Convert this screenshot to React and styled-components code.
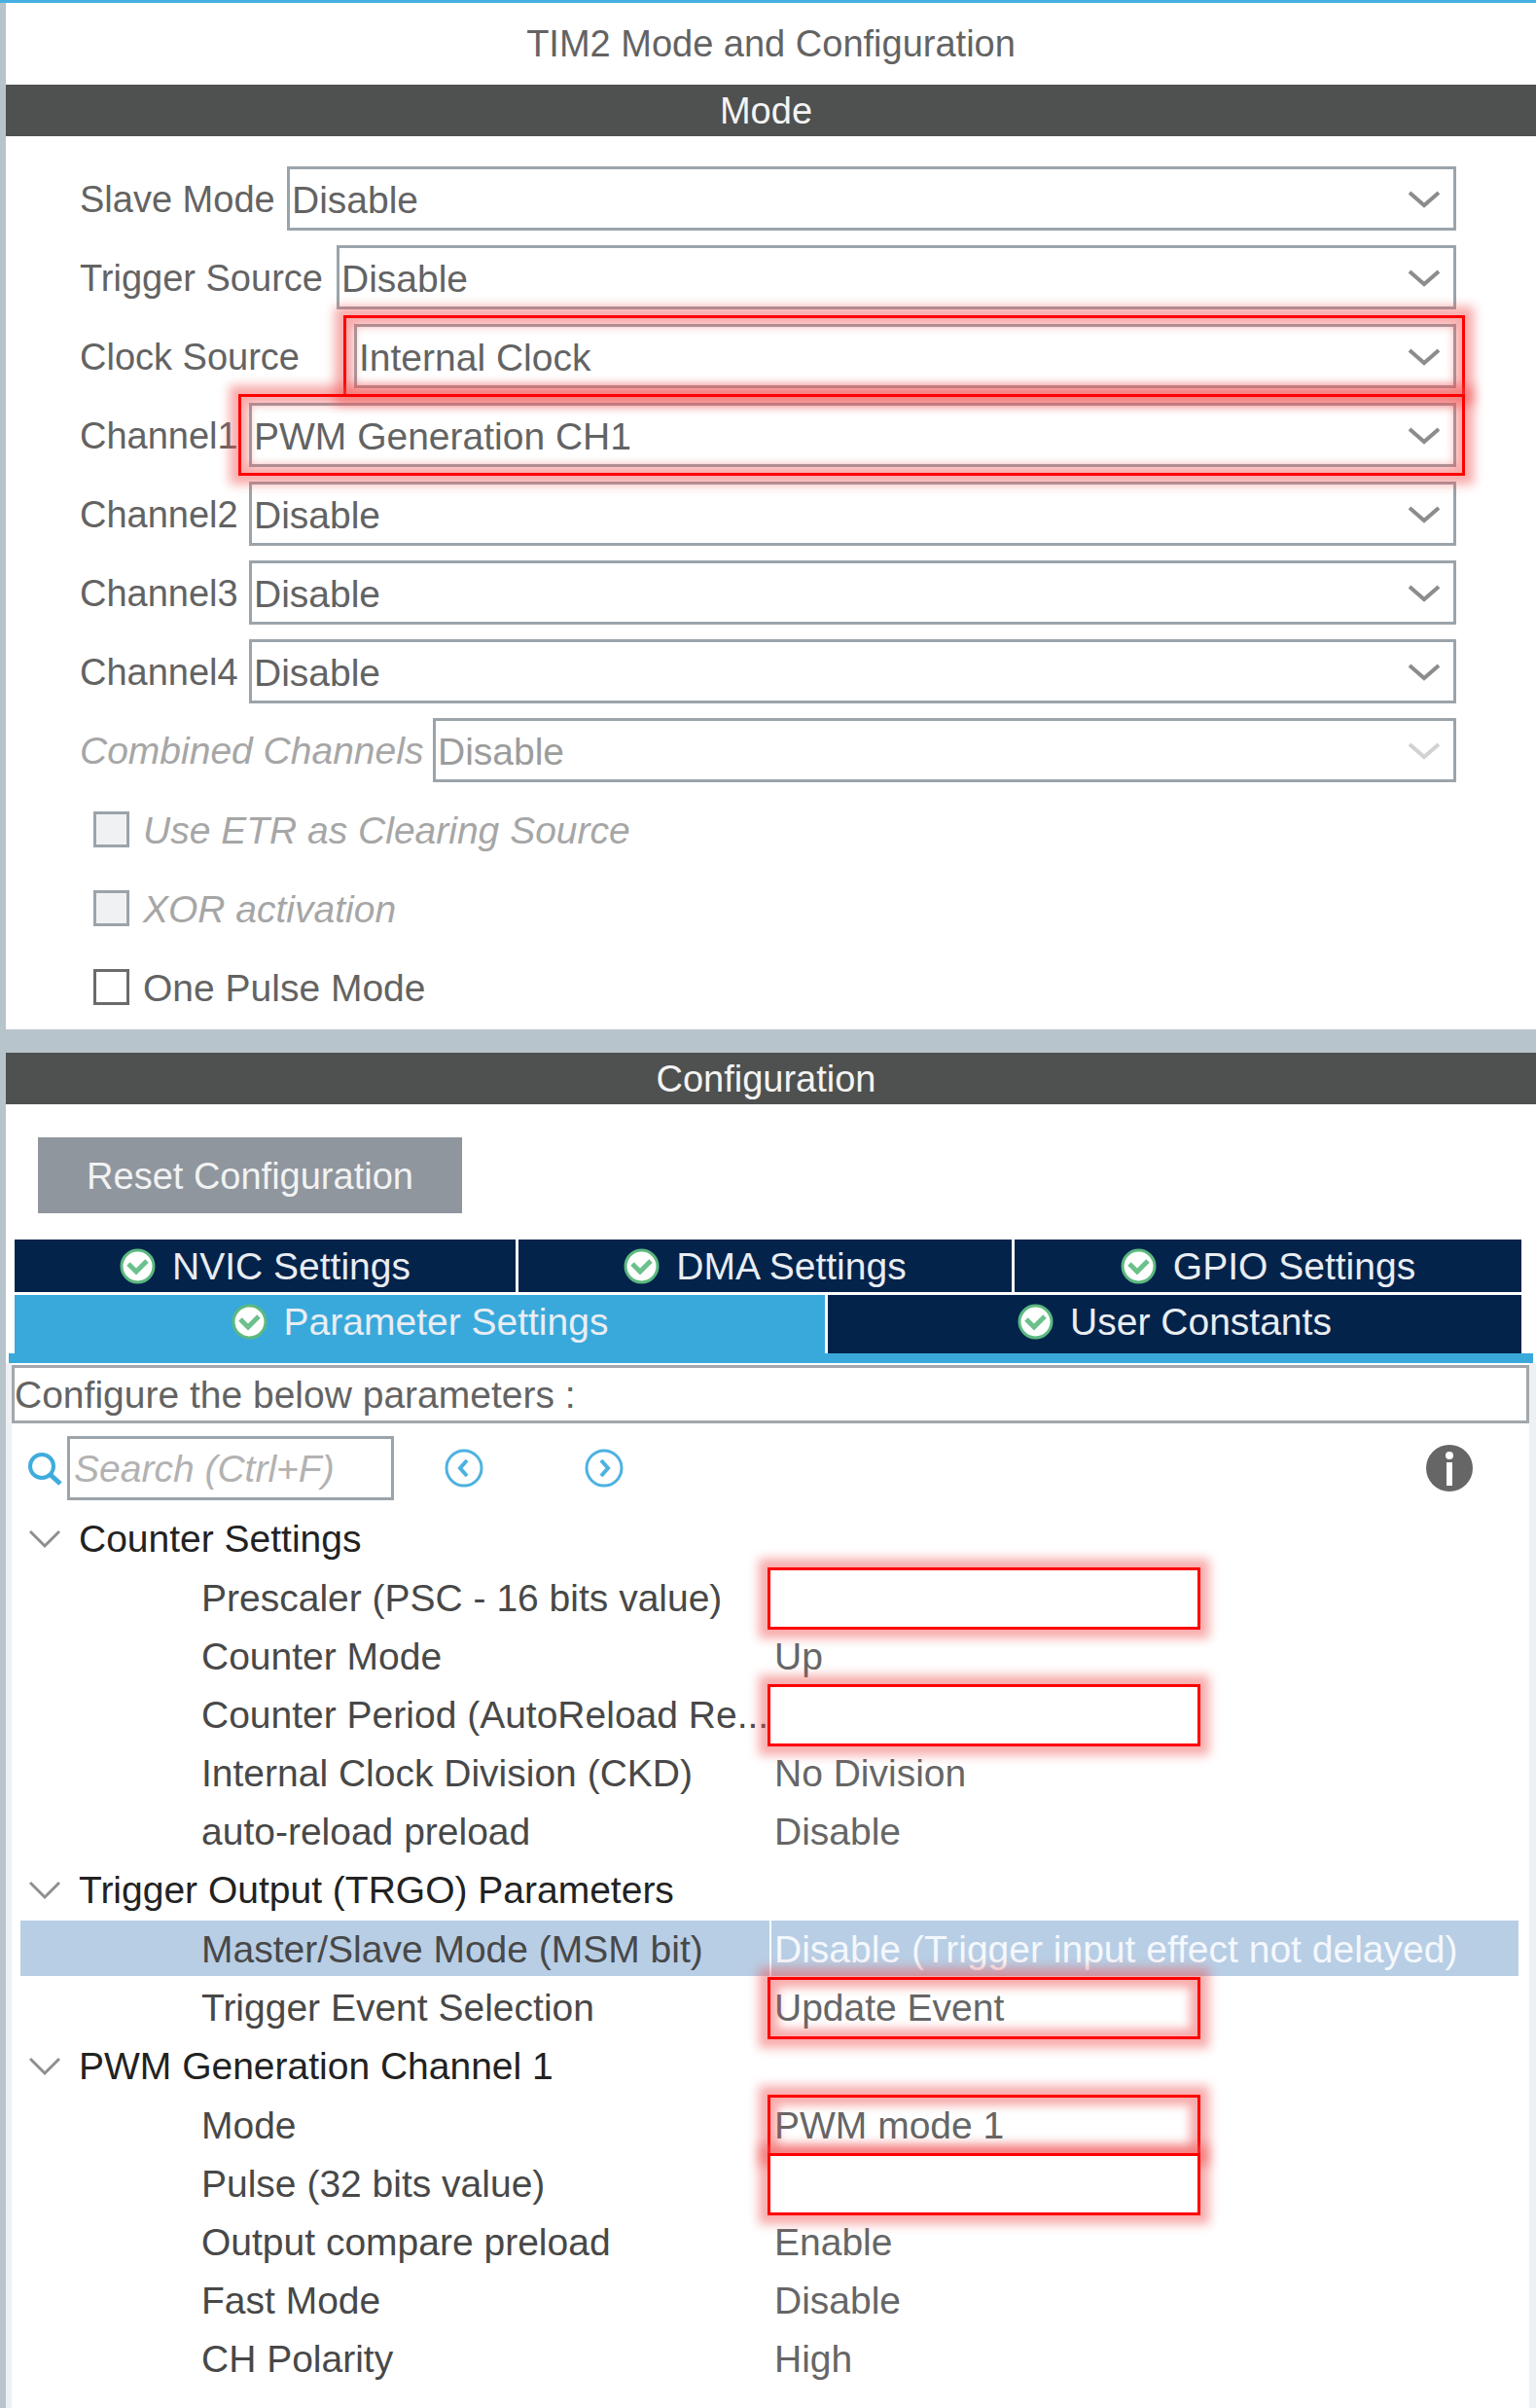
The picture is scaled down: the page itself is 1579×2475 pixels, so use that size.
import React from 'react';
import styled, { createGlobalStyle, css } from 'styled-components';

const GlobalStyle = createGlobalStyle`
  *, *::before, *::after { box-sizing: border-box; }
  body { margin: 0; background: #fff; }
  body, button, input, select {
    font-family: 'Liberation Sans', Arial, sans-serif;
  }
`;

const color = {
  rail: '#b8c4cb',
  bar: '#4f5150',
  navy: '#03234b',
  sky: '#39a9dc',
  line: '#9ba4aa',
  text: '#636363',
  muted: '#a6a6a6',
};

const Page = styled.main`
  display: flex;
  flex-direction: column;
  min-height: 100vh;
  border-left: 6px solid ${color.rail};
  color: ${color.text};
  font-size: 38px;
`;

const TopLine = styled.div`
  height: 3px;
  margin-left: -6px;
  background: #46b0e1;
`;

const Title = styled.h1`
  display: flex;
  align-items: center;
  justify-content: center;
  height: 84px;
  margin: 0;
  font-size: 38px;
  font-weight: 400;
`;

const SectionBar = styled.h2`
  display: flex;
  align-items: center;
  justify-content: center;
  height: 53px;
  margin: 0;
  padding: 2px 10px 0 0;
  background: ${color.bar};
  color: #f4f4f4;
  font-size: 38px;
  font-weight: 400;
`;

const ModePanel = styled.section`
  display: flex;
  flex-direction: column;
  gap: 15px;
  padding: 31px 82px 11px 76px;
`;

const Divider = styled.div`
  height: 24px;
  background: ${color.rail};
`;

const Field = styled.div`
  display: flex;
  align-items: center;
  height: 66px;
`;

const FieldLabel = styled.label`
  flex: none;
  width: ${(p) => p.$width}px;
  padding-top: 2px;
  white-space: nowrap;
  ${(p) => p.$disabled && css`
    color: ${color.muted};
    font-size: 39px;
    font-style: italic;
  `}
`;

const Combo = styled.div`
  position: relative;
  flex: 1;
  height: 100%;
`;

const Select = styled.select`
  width: 100%;
  height: 100%;
  padding: 2px 60px 0 2px;
  appearance: none;
  border: 3px solid ${color.line};
  border-radius: 0;
  background: transparent;
  color: ${color.text};
  font-size: 39px;
  opacity: 1;
  &:disabled { color: #9c9c9c; }
`;

const ComboArrow = styled.svg`
  position: absolute;
  top: 24px;
  right: 16px;
  width: 34px;
  height: 20px;
  pointer-events: none;
`;

const glow = 'rgba(241, 80, 80, 0.48)';

const Highlight = styled.span`
  position: absolute;
  z-index: 1;
  inset: -9px -9px -9px -11px;
  border: 3px solid #f00;
  box-shadow: 0 0 10px 9px ${glow}, inset 0 0 10px 8px ${glow};
  pointer-events: none;
`;

const CheckRow = styled.div`
  display: flex;
  align-items: center;
  gap: 14px;
  height: 66px;
  padding-left: 14px;
  font-size: 39px;
`;

const CheckBox = styled.input`
  width: 37px;
  height: 37px;
  margin: 0;
  appearance: none;
  border: 3px solid #6b6b6b;
  background: #fff;
  &:disabled {
    border-color: ${color.line};
    background: #f0f1f3;
  }
`;

const CheckLabel = styled.label`
  padding-top: 4px;
  ${(p) => p.$disabled && css`
    color: ${color.muted};
    font-style: italic;
  `}
`;

const ResetButton = styled.button`
  align-self: flex-start;
  width: 436px;
  height: 78px;
  margin: 34px 0 27px 33px;
  padding: 2px 0 0;
  border: 0;
  background: #8f969d;
  color: #f1f2f3;
  font-size: 38px;
`;

const Tabs = styled.div`
  display: flex;
  flex-direction: column;
  gap: 3px;
  padding: 0 15px 0 9px;
`;

const TabRow = styled.div`
  display: flex;
  gap: 3px;
`;

const Tab = styled.button`
  display: flex;
  flex: ${(p) => p.$share} 1 0;
  align-items: center;
  justify-content: center;
  gap: 17px;
  height: ${(p) => (p.$lower ? 60 : 54)}px;
  padding: 0 0 ${(p) => (p.$lower ? 6 : 0)}px;
  border: 0;
  background: ${(p) => (p.$active ? color.sky : color.navy)};
  color: #e9edf2;
  font-size: 39px;
  white-space: nowrap;
`;

const TabText = styled.span`
  padding-top: 2px;
`;

const TabIcon = styled.svg`
  flex: none;
  width: 37px;
  height: 37px;
`;

const TabUnderline = styled.div`
  height: 10px;
  margin: 0 3px;
  background: ${color.sky};
`;

const ParameterPanel = styled.div`
  flex: 1;
  padding: 2px 0 20px;
  border: solid #eef1f4;
  border-width: 0 7px 0 6px;
`;

const Notice = styled.p`
  display: flex;
  align-items: center;
  height: 60px;
  margin: 0;
  padding-top: 2px;
  border: 3px solid #a2a7ab;
  font-size: 39px;
`;

const Toolbar = styled.div`
  display: flex;
  align-items: center;
  padding: 13px 58px 10px 16px;
`;

const SearchLabel = styled.label`
  display: flex;
  width: 41px;
`;

const SearchInput = styled.input`
  width: 336px;
  height: 66px;
  margin-right: 52px;
  padding: 2px 4px 0;
  border: 3px solid ${color.line};
  border-radius: 0;
  color: ${color.text};
  font-size: 39px;
  &::placeholder {
    color: #b2b2b2;
    font-style: italic;
    opacity: 1;
  }
`;

const IconButton = styled.button`
  display: flex;
  padding: 0;
  border: 0;
  background: none;
  margin-right: ${(p) => p.$after || 0}px;
  margin-left: ${(p) => (p.$end ? 'auto' : 0)};
`;

const Tree = styled.table`
  width: calc(100% - 20px);
  margin-left: 9px;
  table-layout: fixed;
  border-collapse: separate;
  border-spacing: 0;
  font-size: 39px;
  line-height: 45px;
`;

const GroupCell = styled.th`
  height: 61px;
  padding: 0 0 2px 9px;
  text-align: left;
`;

const GroupButton = styled.button`
  display: flex;
  align-items: center;
  gap: 19px;
  padding: 0;
  border: 0;
  background: none;
  color: #222;
  font-size: 39px;
  line-height: 45px;
`;

const cell = css`
  height: 60px;
  border-bottom: 3px solid #fff;
  background: ${(p) => (p.$selected ? '#b8cee5' : 'transparent')};
  font-weight: 400;
  text-align: left;
  white-space: nowrap;
`;

const NameCell = styled.th`
  ${cell}
  width: 50%;
  padding: 1px 0 0 186px;
  color: #484848;
`;

const ValueCell = styled.td`
  ${cell}
  position: relative;
  padding: 1px 0 0 3px;
  border-left: 2px solid #fff;
  color: ${(p) => (p.$selected ? '#f4f8fc' : '#666')};
`;

const callout = css`
  position: absolute;
  z-index: 1;
  top: -2px;
  left: -4px;
  width: 445px;
  height: 64px;
  border: 3px solid #f00;
`;

const ValueHighlight = styled.span`
  ${callout}
  box-shadow: 0 0 10px 9px ${glow}, inset 0 0 10px 8px ${glow};
  pointer-events: none;
`;

const ValueInput = styled.input`
  ${callout}
  padding: 0 6px;
  border-radius: 0;
  background: #fff;
  box-shadow: 0 0 10px 9px ${glow};
  color: ${color.text};
  font-size: 39px;
`;

const fields = [
  { id: 'slave', label: 'Slave Mode', value: 'Disable', width: 213 },
  { id: 'trigger', label: 'Trigger Source', value: 'Disable', width: 264 },
  { id: 'clock', label: 'Clock Source', value: 'Internal Clock', width: 282, marked: true },
  { id: 'ch1', label: 'Channel1', value: 'PWM Generation CH1', width: 174, marked: true },
  { id: 'ch2', label: 'Channel2', value: 'Disable', width: 174 },
  { id: 'ch3', label: 'Channel3', value: 'Disable', width: 174 },
  { id: 'ch4', label: 'Channel4', value: 'Disable', width: 174 },
  { id: 'combined', label: 'Combined Channels', value: 'Disable', width: 363, disabled: true },
];

const checks = [
  { id: 'etr', label: 'Use ETR as Clearing Source', disabled: true },
  { id: 'xor', label: 'XOR activation', disabled: true },
  { id: 'pulse', label: 'One Pulse Mode' },
];

const groups = [
  {
    title: 'Counter Settings',
    rows: [
      { name: 'Prescaler (PSC - 16 bits value)', editable: true },
      { name: 'Counter Mode', value: 'Up' },
      { name: 'Counter Period (AutoReload Re...', editable: true },
      { name: 'Internal Clock Division (CKD)', value: 'No Division' },
      { name: 'auto-reload preload', value: 'Disable' },
    ],
  },
  {
    title: 'Trigger Output (TRGO) Parameters',
    rows: [
      {
        name: 'Master/Slave Mode (MSM bit)',
        value: 'Disable (Trigger input effect not delayed)',
        selected: true,
      },
      { name: 'Trigger Event Selection', value: 'Update Event', marked: true },
    ],
  },
  {
    title: 'PWM Generation Channel 1',
    rows: [
      { name: 'Mode', value: 'PWM mode 1', marked: true },
      { name: 'Pulse (32 bits value)', editable: true },
      { name: 'Output compare preload', value: 'Enable' },
      { name: 'Fast Mode', value: 'Disable' },
      { name: 'CH Polarity', value: 'High' },
    ],
  },
];

function ComboField({ id, label, value, width, marked, disabled }) {
  return (
    <Field>
      <FieldLabel htmlFor={id} $width={width} $disabled={disabled}>{label}</FieldLabel>
      <Combo>
        <Select id={id} disabled={disabled} defaultValue={value}>
          <option>{value}</option>
        </Select>
        <ComboArrow viewBox="0 0 34 20" fill="none" aria-hidden="true">
          <path d="M2 3 L17 16 L32 3" stroke={disabled ? '#d2d2d2' : '#8c8c8c'} strokeWidth="4" />
        </ComboArrow>
        {marked && <Highlight />}
      </Combo>
    </Field>
  );
}

function SettingsTab({ label, share, lower, active }) {
  return (
    <Tab type="button" role="tab" aria-selected={!!active} $share={share} $lower={lower} $active={active}>
      <TabIcon viewBox="0 0 37 37" aria-hidden="true">
        <circle cx="18.5" cy="18.5" r="16.5" fill="#fff" stroke="#5cb97f" strokeWidth="3" />
        <path d="M9 16 L17 24 L28 13" fill="none" stroke="#6cc08c" strokeWidth="5" />
      </TabIcon>
      <TabText>{label}</TabText>
    </Tab>
  );
}

function StepIcon({ path }) {
  return (
    <svg width="40" height="42" viewBox="0 0 40 42" fill="none" stroke="#4db2e0" aria-hidden="true">
      <circle cx="20" cy="21" r="18" strokeWidth="3" />
      <path d={path} strokeWidth="4" />
    </svg>
  );
}

export default function App() {
  return (
    <>
      <GlobalStyle />
      <Page>
        <TopLine />
        <Title>TIM2 Mode and Configuration</Title>
        <SectionBar>Mode</SectionBar>
        <ModePanel>
          {fields.map((f) => <ComboField key={f.id} {...f} />)}
          {checks.map((c) => (
            <CheckRow key={c.id}>
              <CheckBox type="checkbox" id={c.id} disabled={c.disabled} />
              <CheckLabel htmlFor={c.id} $disabled={c.disabled}>{c.label}</CheckLabel>
            </CheckRow>
          ))}
        </ModePanel>
        <Divider />
        <SectionBar>Configuration</SectionBar>
        <ResetButton type="button">Reset Configuration</ResetButton>
        <Tabs role="tablist">
          <TabRow>
            <SettingsTab label="NVIC Settings" share={515} />
            <SettingsTab label="DMA Settings" share={507} />
            <SettingsTab label="GPIO Settings" share={521} />
          </TabRow>
          <TabRow>
            <SettingsTab label="Parameter Settings" share={833} lower active />
            <SettingsTab label="User Constants" share={713} lower />
          </TabRow>
        </Tabs>
        <TabUnderline />
        <ParameterPanel>
          <Notice>Configure the below parameters :</Notice>
          <Toolbar>
            <SearchLabel htmlFor="search" aria-label="Search">
              <svg width="36" height="36" viewBox="0 0 36 36" fill="none" stroke="#3facde" aria-hidden="true">
                <circle cx="15" cy="16" r="12" strokeWidth="4" />
                <path d="M23 24 L34 34" strokeWidth="5" />
              </svg>
            </SearchLabel>
            <SearchInput id="search" type="text" placeholder="Search (Ctrl+F)" />
            <IconButton type="button" aria-label="Previous" $after={104}>
              <StepIcon path="M23 13 L16 21 L23 29" />
            </IconButton>
            <IconButton type="button" aria-label="Next">
              <StepIcon path="M17 13 L24 21 L17 29" />
            </IconButton>
            <IconButton type="button" aria-label="Information" $end>
              <svg width="48" height="50" viewBox="0 0 48 50" aria-hidden="true">
                <circle cx="24" cy="25" r="24" fill="#666" />
                <circle cx="24" cy="12" r="4" fill="#fff" />
                <rect x="21" y="19" width="6" height="24" fill="#fff" />
              </svg>
            </IconButton>
          </Toolbar>
          <Tree>
            <colgroup>
              <col />
              <col />
            </colgroup>
            {groups.map((g) => (
              <tbody key={g.title}>
                <tr>
                  <GroupCell colSpan={2} scope="colgroup">
                    <GroupButton type="button" aria-expanded="true">
                      <svg width="32" height="20" viewBox="0 0 32 20" fill="none" aria-hidden="true">
                        <path d="M1 2 L16 17 L31 2" stroke="#8e8e8e" strokeWidth="3" />
                      </svg>
                      {g.title}
                    </GroupButton>
                  </GroupCell>
                </tr>
                {g.rows.map((r) => (
                  <tr key={r.name}>
                    <NameCell scope="row" $selected={r.selected}>{r.name}</NameCell>
                    <ValueCell $selected={r.selected}>
                      {r.value}
                      {r.marked && <ValueHighlight />}
                      {r.editable && <ValueInput type="text" aria-label={r.name} />}
                    </ValueCell>
                  </tr>
                ))}
              </tbody>
            ))}
          </Tree>
        </ParameterPanel>
      </Page>
    </>
  );
}
